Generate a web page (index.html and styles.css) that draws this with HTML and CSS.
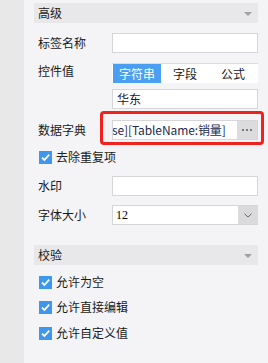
FILE: index.html
```html
<!DOCTYPE html>
<html>
<head>
<meta charset="utf-8">
<link rel="stylesheet" href="styles.css">
</head>
<body>
<div class="page">
  <div class="strip"></div>
  <div class="panel">
    <div class="section-head"><span>高级</span><i class="tri"></i></div>

    <div class="row r-name">
      <div class="label">标签名称</div>
      <div class="field input"></div>
    </div>

    <div class="row r-value">
      <div class="label label-top">控件值</div>
      <div class="field">
        <div class="tabs">
          <div class="tab active">字符串</div>
          <div class="tab">字段</div>
          <div class="tab">公式</div>
        </div>
        <div class="input input-text r-east">华东</div>
      </div>
    </div>

    <div class="row r-dict">
      <div class="label">数据字典</div>
      <div class="field combo">
        <div class="combo-text"><span class="dict">se][TableName:销量]</span></div>
        <div class="combo-btn dots"><i></i><i></i><i></i></div>
      </div>
      <div class="highlight"></div>
    </div>

    <label class="check r-dedupe"><span class="box"><svg viewBox="0 0 13 13" width="13" height="13"><path d="M3 6.6 L5.4 9 L10.2 3.6" fill="none" stroke="#fff" stroke-width="1.8"/></svg></span>去除重复项</label>

    <div class="row r-mark">
      <div class="label">水印</div>
      <div class="field input"></div>
    </div>

    <div class="row r-size">
      <div class="label">字体大小</div>
      <div class="field combo">
        <div class="combo-text serif">12</div>
        <div class="combo-btn select-btn"><svg viewBox="0 0 8 5" width="8" height="5"><path d="M0.5 0.8 L4 4 L7.5 0.8" fill="none" stroke="#666" stroke-width="1"/></svg></div>
      </div>
    </div>

    <div class="section-head r-verify"><span>校验</span><i class="tri"></i></div>

    <label class="check r-c1"><span class="box"><svg viewBox="0 0 13 13" width="13" height="13"><path d="M3 6.6 L5.4 9 L10.2 3.6" fill="none" stroke="#fff" stroke-width="1.8"/></svg></span>允许为空</label>
    <label class="check r-c2"><span class="box"><svg viewBox="0 0 13 13" width="13" height="13"><path d="M3 6.6 L5.4 9 L10.2 3.6" fill="none" stroke="#fff" stroke-width="1.8"/></svg></span>允许直接编辑</label>
    <label class="check r-c3"><span class="box"><svg viewBox="0 0 13 13" width="13" height="13"><path d="M3 6.6 L5.4 9 L10.2 3.6" fill="none" stroke="#fff" stroke-width="1.8"/></svg></span>允许自定义值</label>
  </div>
</div>
</body>
</html>
```
FILE: styles.css
```css
* { box-sizing: border-box; }
html, body { margin: 0; padding: 0; }
body {
  width: 268px;
  height: 363px;
  overflow: hidden;
  font-family: "Noto Sans CJK SC", "Noto Sans", sans-serif;
  font-size: 12px;
  color: #1a1a1a;
  background: #f4f4f6;
}
.page { display: flex; height: 363px; }
.strip { width: 24px; flex: none; background: #e8e8e8; }
.panel {
  flex: 1;
  background: #f4f4f6;
  padding: 3px 10px 0 10px;
  display: flex;
  flex-direction: column;
}
.section-head {
  height: 20px;
  background: #e8e8ea;
  display: flex;
  align-items: center;
  justify-content: space-between;
  padding: 0 6px 0 4px;
  line-height: 20px;
}
.tri {
  width: 0; height: 0;
  border-left: 4px solid transparent;
  border-right: 4px solid transparent;
  border-top: 4px solid #a0a0a0;
  margin-top: 1px;
}
.row { display: flex; position: relative; }
.label {
  width: 78px;
  flex: none;
  padding-left: 4px;
  line-height: 20px;
  height: 20px;
}
.label-top { line-height: 16px; }
.field { flex: 1; min-width: 0; }
.input {
  height: 20px;
  background: #fff;
  border: 1px solid #d6d6d8;
}
.input-text { padding-left: 4px; line-height: 18px; }
.tabs {
  display: flex;
  height: 20px;
  background: #fff;
  border-top: 1px solid #dcdcde;
  padding-left: 1px;
}
.tab {
  width: 48px;
  text-align: center;
  line-height: 19px;
  color: #1a1a1a;
}
.tab.active { background: #4a9ff2; color: #fff; }
.r-name { margin-top: 10px; }
.r-value { margin-top: 10px; }
.r-east { margin-top: 6px; }
.r-dict { margin-top: 11px; }
.combo {
  height: 20px;
  display: flex;
  background: #fff;
  border: 1px solid #d6d6d8;
  border-right: none;
}
.r-dict .combo { border-right: 1px solid #d6d6d8; }
.combo-text {
  flex: 1;
  min-width: 0;
  overflow: hidden;
  white-space: nowrap;
  line-height: 18px;
}
.dict {
  display: inline-block;
  margin-left: -1px;
  color: #1d2a4c;
  font-family: "Noto Sans", sans-serif;
  letter-spacing: -0.1px;
}
.dict { font-family: "Noto Sans CJK SC", "Noto Sans", sans-serif; }
.combo-btn {
  flex: none;
  width: 20px;
  background: #dcdcde;
  display: flex;
  align-items: center;
  justify-content: center;
}
.dots { gap: 2px; }
.dots i { width: 2px; height: 2px; background: #7a7a7a; display: block; }
.select-btn { background: #dadadc; }
.serif {
  font-family: "Liberation Serif", serif;
  font-size: 12px;
  padding-left: 3px;
  color: #000;
}
.highlight {
  position: absolute;
  left: 66px;
  top: -9px;
  width: 164px;
  height: 34px;
  border: 3px solid #f0221e;
  border-radius: 4px;
  pointer-events: none;
}
.check {
  display: flex;
  align-items: center;
  height: 14px;
  line-height: 14px;
  padding-left: 5px;
}
.box {
  width: 13px;
  height: 13px;
  background: #3d97ee;
  margin-right: 4px;
  display: block;
  flex: none;
}
.box svg { display: block; }
.r-dedupe { margin-top: 10px; }
.r-mark { margin-top: 12px; }
.r-size { margin-top: 9px; }
.r-verify { margin-top: 20px; }
.r-c1 { margin-top: 10px; }
.r-c2 { margin-top: 11px; }
.r-c3 { margin-top: 12px; }
```
